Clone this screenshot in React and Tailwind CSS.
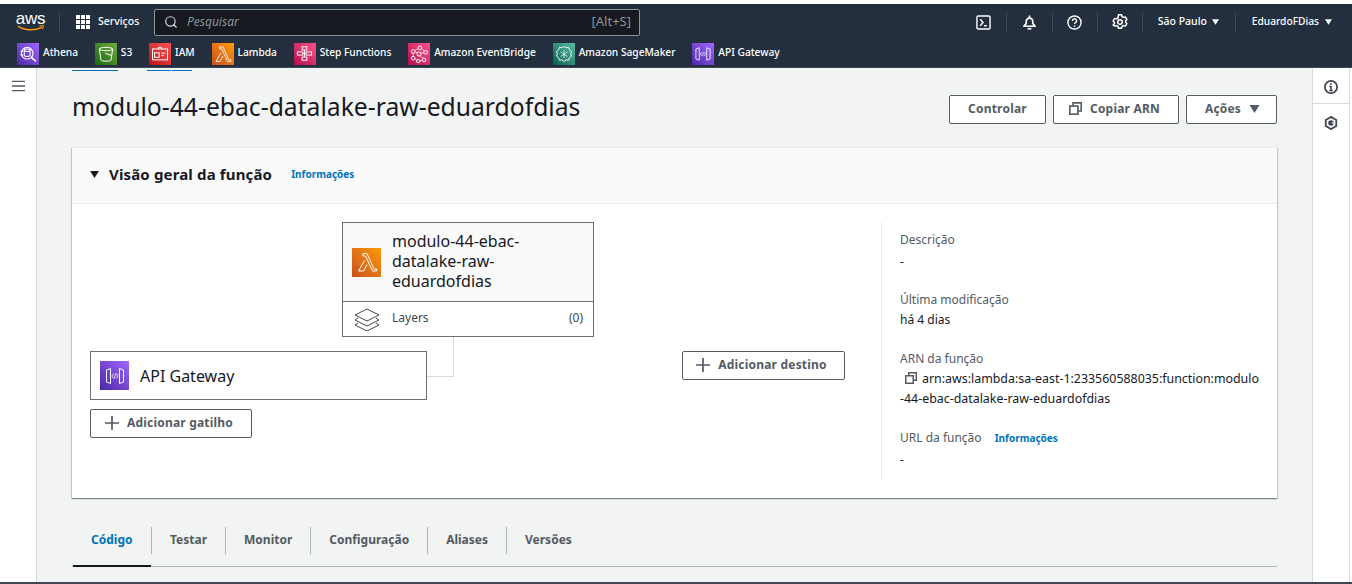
import React from 'react'
import { Search } from 'lucide-react'

const Tile = ({ className, children, size = 'w-[22px] h-[22px]' }) => (
  <span className={`${size} ${className} flex items-center justify-center shrink-0`}>{children}</span>
)

const Caret = ({ className = '' }) => (
  <svg viewBox="0 0 10 8" className={className}><path d="M0 0h10L5 8z" fill="currentColor" /></svg>
)

const CopyIcon = ({ className = '' }) => (
  <svg viewBox="0 0 16 16" fill="none" stroke="currentColor" strokeWidth="2" className={className}>
    <rect x="1" y="5" width="10" height="10" />
    <path d="M5 5V1h10v10h-4" />
  </svg>
)

const PlusIcon = () => (
  <svg viewBox="0 0 14 14" className="w-[14px] h-[14px]" fill="none" stroke="currentColor" strokeWidth="1.700">
    <path d="M7 0v14M0 7h14" />
  </svg>
)

const LambdaGlyph = ({ className = '' }) => (
  <svg viewBox="0 0 24 24" fill="none" stroke="#fff" strokeWidth="1" className={className}>
    <path d="M8 3.500h4l7 15.500h2.500v2h-4L10.500 6H8z" />
    <path d="M9.500 10.500L3.500 21h5l3.500-6.500" />
  </svg>
)

const ApiGlyph = ({ className = '' }) => (
  <svg viewBox="0 0 24 24" fill="none" stroke="#fff" strokeWidth="1" className={className}>
    <path d="M3.500 6l4-1.500v15l-4-1.500z" />
    <path d="M20.500 6l-4-1.500v15l4-1.500z" />
    <path d="M10.500 9.500L9 12l1.500 2.500M13.500 9.500L15 12l-1.500 2.500M12.500 9.500l-1 5" strokeWidth="0.8" />
  </svg>
)

const favorites = [
  {
    name: 'Athena',
    bg: 'bg-gradient-to-tr from-[#4d27a8] to-[#a166ff]',
    glyph: (
      <svg viewBox="0 0 24 24" fill="none" stroke="#fff" strokeWidth="1.300" className="w-[20px] h-[20px]">
        <circle cx="11" cy="11" r="7" />
        <path d="M15.800 15.800L21.500 21" strokeWidth="2" />
        <ellipse cx="11" cy="7.500" rx="3.500" ry="1.500" />
        <path d="M7.500 7.500v6c0 2 7 2 7 0v-6M3 9h3M3 13h3" />
      </svg>
    ),
  },
  {
    name: 'S3',
    bg: 'bg-gradient-to-tr from-[#1b660f] to-[#6cae3e]',
    glyph: (
      <svg viewBox="0 0 24 24" fill="none" stroke="#fff" strokeWidth="1.200" className="w-[20px] h-[20px]">
        <ellipse cx="12" cy="6" rx="8" ry="2" />
        <path d="M4 6l2 13.500c1 1.500 11 1.500 12 0L20 6" />
        <path d="M11 11l8 3" />
      </svg>
    ),
  },
  {
    name: 'IAM',
    bg: 'bg-gradient-to-tr from-[#bd0816] to-[#ff5252]',
    glyph: (
      <svg viewBox="0 0 24 24" fill="none" stroke="#fff" strokeWidth="1.200" className="w-[20px] h-[20px]">
        <rect x="3" y="6" width="18" height="13" />
        <rect x="5.500" y="10.500" width="5.500" height="5.500" />
        <path d="M13.500 11h5M13.500 14h3M10 6V4h4v2" />
      </svg>
    ),
  },
  {
    name: 'Lambda',
    bg: 'bg-gradient-to-tr from-[#c8511b] to-[#ff9900]',
    glyph: <LambdaGlyph className="w-[20px] h-[20px]" />,
  },
  {
    name: 'Step Functions',
    bg: 'bg-gradient-to-tr from-[#b0084d] to-[#ff4f8b]',
    glyph: (
      <svg viewBox="0 0 24 24" fill="none" stroke="#fff" strokeWidth="1.200" className="w-[19px] h-[19px]">
        <rect x="9" y="3.500" width="6" height="4" />
        <rect x="3" y="10" width="7" height="4" />
        <rect x="14" y="10" width="7" height="4" />
        <rect x="9" y="16.500" width="6" height="4" />
        <path d="M12 7.500v9M10 12h4" />
      </svg>
    ),
  },
  {
    name: 'Amazon EventBridge',
    bg: 'bg-gradient-to-tr from-[#b0084d] to-[#ff4f8b]',
    glyph: (
      <svg viewBox="0 0 24 24" fill="none" stroke="#fff" strokeWidth="1.200" className="w-[20px] h-[20px]">
        <circle cx="13" cy="4.500" r="2.200" />
        <circle cx="5" cy="9" r="2.200" />
        <circle cx="20" cy="10" r="2.200" />
        <circle cx="5" cy="17" r="2.200" />
        <circle cx="18" cy="19" r="2.200" />
        <circle cx="11" cy="20.500" r="2" />
        <circle cx="12" cy="12" r="2.500" />
        <path d="M7 8l4-2.500M15 5.500l3.500 3M5 11.200v3.500M7 17.500l2.500 2M13 20.500l3-1M10 10.500L7 9.500M14.200 11l3.800-.5M13 14l4 3.500" strokeWidth="0.9" />
      </svg>
    ),
  },
  {
    name: 'Amazon SageMaker',
    bg: 'bg-gradient-to-tr from-[#055f4e] to-[#56c0a7]',
    glyph: (
      <svg viewBox="0 0 24 24" fill="none" stroke="#fff" strokeWidth="1.100" className="w-[20px] h-[20px]">
        <path d="M12 3l2.500 1.500 3-.5 1 3 2.500 2-1 3 1 2.500-2.500 2-1 3-3-.5-2.500 2-2.500-2-3 .5-1-3L3 14.500 4 12l-1-3 2.500-2 1-3 3 .5z" />
        <path d="M12 7v10M8 9.500l4 3 4-3M8 15l4-2.500 4 2.500" strokeWidth="0.9" />
      </svg>
    ),
  },
  {
    name: 'API Gateway',
    bg: 'bg-gradient-to-tr from-[#4d27a8] to-[#a166ff]',
    glyph: <ApiGlyph className="w-[20px] h-[20px]" />,
  },
]

const tabs = ['Código', 'Testar', 'Monitor', 'Configuração', 'Aliases', 'Versões']

const Button = ({ children, className = '' }) => (
  <button className={`h-[29px] flex items-center justify-center rounded-[2px] border border-[#545b64] bg-white text-[#545b64] text-[12px] font-bold tracking-[0.2px] pb-[2px] ${className}`}>
    {children}
  </button>
)

const Field = ({ label, children, className = '', valueClass = '' }) => (
  <div className={className}>
    <div className="text-[12px] leading-[20px] text-[#545b64]">{label}</div>
    <div className={`text-[12px] leading-[20px] text-[#16191f] ${valueClass}`}>{children}</div>
  </div>
)

export default function App() {
  return (
    <div className="w-[1352px] h-[584px] overflow-hidden flex flex-col bg-white pt-[4px] font-['Noto_Sans',sans-serif] text-[#16191f]">
      <header className="h-[64px] shrink-0 bg-[#232f3e] text-white border-b border-[#3d4754]">
        <div className="h-[36px] flex items-center">
          <div className="w-[59px] flex flex-col items-center pl-[2px]">
            <span className="font-['Liberation_Sans',sans-serif] text-[17px] leading-[13px] tracking-[-0.3px]">aws</span>
            <svg viewBox="0 0 30 7" className="w-[28px] h-[7px]">
              <path d="M1 1c7 5 19 5 26 1" fill="none" stroke="#ff9900" strokeWidth="1.500" />
              <path d="M24 .8l4.500-.5-1.200 4" fill="none" stroke="#ff9900" strokeWidth="1" />
            </svg>
          </div>
          <span className="h-[20px] w-px bg-[#414750]" />
          <div className="flex items-center w-[94px] pl-[16px] gap-[8px]">
            <svg viewBox="0 0 14 14" className="w-[14px] h-[14px]" fill="#fff">
              <rect width="4" height="4" /><rect x="5" width="4" height="4" /><rect x="10" width="4" height="4" />
              <rect y="5" width="4" height="4" /><rect x="5" y="5" width="4" height="4" /><rect x="10" y="5" width="4" height="4" />
              <rect y="10" width="4" height="4" /><rect x="5" y="10" width="4" height="4" /><rect x="10" y="10" width="4" height="4" />
            </svg>
            <span className="text-[10.500px] font-medium">Serviços</span>
          </div>
          <div className="w-[486px] h-[27px] flex items-center rounded-[2px] border border-[#879596] bg-[#16191f] pl-[9px] pr-[8px]">
            <Search size={14} strokeWidth={2} className="text-[#d5dbdb]" />
            <span className="ml-[9px] text-[12px] italic text-[#879596]">Pesquisar</span>
            <span className="ml-auto text-[13px] text-[#879596]">[Alt+S]</span>
          </div>
          <div className="ml-auto flex items-center h-[21px] pr-[20px]">
            <div className="w-[46px] flex justify-center border-r border-[#414750] h-full items-center">
              <svg viewBox="0 0 16 16" fill="none" stroke="#fff" className="w-[15px] h-[15px]" strokeWidth="1.500">
                <rect x="1" y="1" width="14" height="14" rx="1.500" />
                <path d="M4.500 4.500L7.500 8l-3 3.500M8.500 11.500h3" />
              </svg>
            </div>
            <div className="w-[46px] flex justify-center border-r border-[#414750] h-full items-center">
              <svg viewBox="0 0 16 16" className="w-[15px] h-[15px]" fill="none" stroke="#fff" strokeWidth="1.800">
                <path d="M8 .500v2M4.500 9V6.800a3.500 3.500 0 017 0V9l2.500 3H2z" strokeLinejoin="round" />
                <path d="M6 14.700h4" />
              </svg>
            </div>
            <div className="w-[45px] flex justify-center border-r border-[#414750] h-full items-center">
              <svg viewBox="0 0 16 16" className="w-[15px] h-[15px]" fill="none" stroke="#fff" strokeWidth="1.500">
                <circle cx="8" cy="8" r="7" />
                <path d="M5.800 6.300a2.200 2.200 0 114 1.200c-.8.700-1.800 1-1.800 2.200" />
                <path d="M8 11v1.500" />
              </svg>
            </div>
            <div className="w-[45px] flex justify-center border-r border-[#414750] h-full items-center">
              <svg viewBox="0 0 16 16" className="w-[16px] h-[16px]" fill="none" stroke="#fff" strokeWidth="1.500">
                <path d="M6.500 1.200h3l.5 1.800 1.600.9 1.800-.5 1.500 2.600-1.300 1.300v1.400l1.300 1.300-1.500 2.600-1.800-.5-1.600.9-.5 1.800h-3l-.5-1.800-1.600-.9-1.800.5L1.100 11.500l1.300-1.300V8.800L1.100 7.500l1.500-2.600 1.800.5L6 4.500z" strokeLinejoin="round" transform="translate(0 -0.500)" />
                <circle cx="8" cy="8" r="2.300" />
              </svg>
            </div>
            <div className="w-[93px] flex items-center border-r border-[#414750] h-full pl-[15px] gap-[5px]">
              <span className="text-[10.500px] font-medium">São Paulo</span>
              <Caret className="w-[7px] h-[6px] text-white" />
            </div>
            <div className="flex items-center pl-[16px] gap-[6px]">
              <span className="text-[10.200px] font-medium">EduardoFDias</span>
              <Caret className="w-[7px] h-[6px] text-white" />
            </div>
          </div>
        </div>
        <div className="h-[27px] flex items-center pl-[17px]">
          {favorites.map((f) => (
            <div key={f.name} className="flex items-center gap-[4px] mr-[16.800px]">
              <Tile className={f.bg}>{f.glyph}</Tile>
              <span className="text-[10.200px] font-medium whitespace-nowrap -mt-[2px]">{f.name}</span>
            </div>
          ))}
        </div>
      </header>

      <div className="flex-1 min-h-0 flex">
        <aside className="w-[37px] shrink-0 border-r border-[#d5dbdb] bg-white flex justify-center pt-[12px] pl-px">
          <svg viewBox="0 0 14 12" className="w-[13px] h-[12px]" fill="none" stroke="#545b64" strokeWidth="1.500">
            <path d="M0 1h14M0 6h14M0 11h14" />
          </svg>
        </aside>

        <main className="flex-1 min-w-0 bg-[#f2f3f3] px-[35px]">
          <div className="flex h-[3px]">
            <span className="w-[46px] border-b border-[#0073bb]" />
            <span className="ml-[29px] w-[24px] border-b border-[#0073bb]" />
            <span className="ml-px w-[20px] border-b border-[#0073bb]" />
          </div>
          <div className="flex items-center h-[29px] mt-[24px]">
            <h1 className="text-[24.700px] leading-[29px] font-normal -mt-[7px]">modulo-44-ebac-datalake-raw-eduardofdias</h1>
            <div className="ml-auto flex gap-[7px]">
              <Button className="w-[97px]">Controlar</Button>
              <Button className="w-[126px] gap-[8px] pr-[3px]"><CopyIcon className="w-[13px] h-[13px]" />Copiar ARN</Button>
              <Button className="w-[91px] gap-[8px] pl-[2px]">Ações<Caret className="w-[11px] h-[8px]" /></Button>
            </div>
          </div>

          <section className="mt-[23px] h-[351px] bg-white flex flex-col border-t border-[#eaeded] shadow-[0_1px_1px_0_rgba(0,28,36,0.3),1px_1px_1px_0_rgba(0,28,36,0.15),-1px_1px_1px_0_rgba(0,28,36,0.15)]">
            <div className="h-[56px] shrink-0 bg-[#fafafa] border-b border-[#eaeded] flex items-center pl-[18px] pb-[3px]">
              <Caret className="w-[9px] h-[7px] text-[#16191f]" />
              <span className="ml-[10px] text-[15px] font-bold tracking-[0.15px]">Visão geral da função</span>
              <span className="ml-[19px] text-[10px] font-bold text-[#0073bb]">Informações</span>
            </div>
            <div className="flex-1 flex pt-[18px]">
              <div className="w-[809px] shrink-0 pl-[18px]">
                <div className="ml-[252px] w-[252px] h-[115px] border border-[#687078] flex flex-col relative">
                  <div className="flex-1 bg-[#fafafa] flex items-center pl-[9px] gap-[11px] border-b border-[#687078]">
                    <Tile className="bg-gradient-to-tr from-[#c8511b] to-[#ff9900]" size="w-[29px] h-[29px]">
                      <LambdaGlyph className="w-[24px] h-[24px]" />
                    </Tile>
                    <span className="text-[16px] leading-[20px] w-[190px] -mt-[2px]">modulo-44-ebac-datalake-raw-eduardofdias</span>
                  </div>
                  <div className="h-[34px] flex items-center pl-[11px] pr-[10px] text-[12px]">
                    <svg viewBox="0 0 26 24" className="w-[26px] h-[24px]" fill="none" stroke="#414750" strokeWidth="1">
                      <path d="M13 2l12 6-12 6-12-6z" />
                      <path d="M4 11l-3 2 12 6 12-6-3-2" />
                      <path d="M4 16l-3 2 12 6 12-6-3-2" />
                    </svg>
                    <span className="ml-[12px] -mt-[2px] text-[#414750]">Layers</span>
                    <span className="ml-auto -mt-[2px] text-[#414750]">(0)</span>
                  </div>
                  <span className="absolute left-[110px] top-[114px] w-px h-[40px] bg-[#d5dbdb]" />
                  <span className="absolute left-[84px] top-[153px] w-[27px] h-px bg-[#d5dbdb]" />
                </div>
                <div className="flex mt-[14px]">
                  <div>
                    <div className="w-[337px] h-[49px] border border-[#687078] flex items-center pl-[9px] gap-[11px]">
                      <Tile className="bg-gradient-to-tr from-[#4d27a8] to-[#a166ff]" size="w-[29px] h-[29px]">
                        <ApiGlyph className="w-[24px] h-[24px]" />
                      </Tile>
                      <span className="text-[16px] text-[#16191f]">API Gateway</span>
                    </div>
                    <Button className="w-[162px] mt-[9px] gap-[8px] pr-[4px]"><PlusIcon />Adicionar gatilho</Button>
                  </div>
                  <Button className="w-[163px] ml-[255px] gap-[8px] pr-[4px]"><PlusIcon />Adicionar destino</Button>
                </div>
              </div>
              <div className="flex-1 h-[258px] border-l border-[#eaeded] pl-[18px] pr-[17px]">
                <Field label="Descrição" className="pt-[8px]" valueClass="mt-[2px]">-</Field>
                <Field label="Última modificação" className="mt-[18px]">há 4 dias</Field>
                <Field label="ARN da função" className="mt-[19px]">
                  <span className="break-all text-[12.400px] leading-[20px] block">
                    <CopyIcon className="inline-block w-[12px] h-[12px] ml-[5px] mr-[5px] text-[#545b64] align-[-1px]" />
                    arn:aws:lambda:sa-east-1:233560588035:function:modulo-44-ebac-datalake-raw-eduardofdias
                  </span>
                </Field>
                <Field
                  className="mt-[19px]"
                  valueClass="mt-[2px]"
                  label={<>URL da função <span className="ml-[10px] text-[10px] font-bold text-[#0073bb]">Informações</span></>}
                >-</Field>
              </div>
            </div>
          </section>

          <nav className="mt-[21px] h-[48px] relative flex items-start border-b border-[#aab7b8] pt-[8px]">
            {tabs.map((t, i) => (
              <div
                key={t}
                className={`h-[27px] flex items-center pb-[2px] text-[12px] font-bold ${i === 0 ? 'text-[#0073bb] ml-px pl-[18px] pr-[18px] w-[78px]' : 'text-[#545b64] border-l border-[#aab7b8] px-[18px]'}`}
              >
                {t}
              </div>
            ))}
            <span className="absolute left-[1px] bottom-[-1px] w-[78px] h-[2px] bg-[#16191f]" />
          </nav>
        </main>

        <aside className="w-[38px] shrink-0 border-x border-[#d5dbdb] bg-white flex flex-col">
          <div className="h-[36px] flex items-center justify-center border-b border-[#d5dbdb] pt-[2px]">
            <svg viewBox="0 0 16 16" className="w-[14px] h-[14px]" fill="none" stroke="#414750" strokeWidth="2">
              <circle cx="8" cy="8" r="7" />
              <path d="M8 3.500v2M6 7.500h2V12M6 12h4" strokeWidth="1.800" />
            </svg>
          </div>
          <div className="h-[36px] flex items-center justify-center pt-[2px]">
            <svg viewBox="0 0 16 16" className="w-[14px] h-[14px]" fill="none" stroke="#414750" strokeWidth="2">
              <path d="M8 1l6 3.500v7L8 15l-6-3.500v-7z" />
              <circle cx="8" cy="8" r="2.200" fill="#414750" />
              <path d="M9 7.500l3 1.500" stroke="#fff" strokeWidth="1.200" />
            </svg>
          </div>
        </aside>
        <div className="w-[2px] shrink-0 bg-white" />
      </div>
      <div className="h-[2px] shrink-0 bg-[#414750]" />
    </div>
  )
}
